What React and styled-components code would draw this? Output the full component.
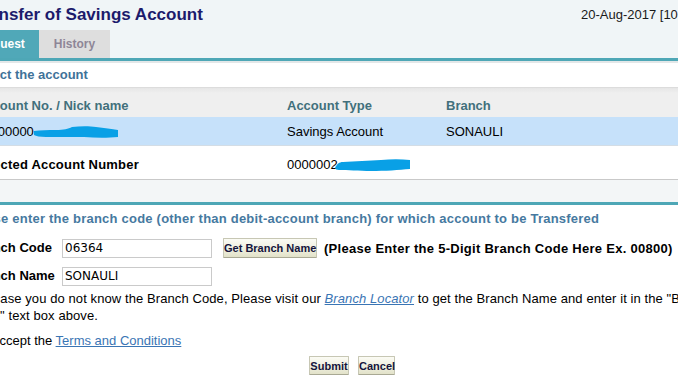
import React from "react";
import styled, { createGlobalStyle } from "styled-components";

const Global = createGlobalStyle`
  html, body { margin: 0; padding: 0; background: #fff; overflow: hidden; }
  body { font-family: "Liberation Sans", Arial, sans-serif; }
`;

const Page = styled.div`
  width: 718px;
  margin-left: -40px;
  font-family: "Liberation Sans", Arial, sans-serif;
  font-size: 13px;
  color: #000;
`;

const Header = styled.div`
  background: #f0f5f7;
  border-bottom: 3px solid #4ea7b6;
`;

const TitleRow = styled.div`
  display: flex;
  height: 30px;
`;

const Title = styled.h1`
  box-sizing: border-box;
  flex: 0 0 621px;
  margin: 0;
  padding: 5px 0 0 13px;
  font-size: 17px;
  line-height: 20px;
  font-weight: bold;
  color: #1c1b6c;
  white-space: nowrap;
`;

const DateText = styled.div`
  flex: 0 0 auto;
  padding-top: 7px;
  font-size: 13px;
  line-height: 15px;
  color: #1a1a1a;
  white-space: nowrap;
`;

const Tabs = styled.div`
  display: flex;
  height: 28px;
  padding-left: 3px;
`;

const Tab = styled.div`
  padding: 0 14.5px;
  line-height: 28px;
  font-size: 12px;
  font-weight: bold;
  background: ${(p) => (p.$active ? "#50a8b8" : "#dedede")};
  color: ${(p) => (p.$active ? "#ffffff" : "#8e8697")};
`;

const SelectBar = styled.div`
  border-top: 2px solid #e3e7e8;
  height: 24px;
  line-height: 24px;
  padding-left: 13px;
  font-weight: bold;
  color: #3f7299;
  background: #fff;
`;

const TableHead = styled.div`
  display: grid;
  grid-template-columns: 311px 159px 1fr;
  padding: 6px 0 0 16px;
  line-height: 23px;
  border-top: 1px solid #dcdcdc;
  background: linear-gradient(#e6e6e6, #efefef 5px, #efefef);
  font-weight: bold;
  color: #42707c;
`;

const SelectedRow = styled.div`
  display: grid;
  grid-template-columns: 311px 159px 1fr;
  padding: 1px 0 0 16px;
  line-height: 27px;
  background: #c6e1fa;
  border-bottom: 1px solid #d4dde5;
`;

const AccountRow = styled.div`
  display: grid;
  grid-template-columns: 314px 1fr;
  padding: 5px 0 0 13px;
  line-height: 28px;
  background: #fff;
  border-bottom: 1px solid #c9c9c9;
`;

const Label = styled.span`
  font-weight: bold;
  white-space: nowrap;
  letter-spacing: 0.2px;
`;

const Cell = styled.span`
  white-space: nowrap;
`;

const TableFoot = styled.div`
  height: 22px;
  background: #f3f6f7;
  border-bottom: 3px solid #4ea7b6;
`;

const Scribble = styled.svg`
  display: inline-block;
  vertical-align: -2px;
  margin-left: ${(p) => p.$shift || 0}px;
`;

const FormHeading = styled.div`
  padding: 5.5px 0 0 6px;
  line-height: 16px;
  font-weight: bold;
  letter-spacing: 0.22px;
  color: #4679a0;
  white-space: nowrap;
`;

const FieldRow = styled.div`
  display: flex;
  align-items: center;
  height: 20px;
  margin-top: ${(p) => p.$gap}px;
  padding-left: 11px;
`;

const FieldLabel = styled.span`
  width: 91px;
  font-weight: bold;
  white-space: nowrap;
  line-height: 20px;
`;

const TextInput = styled.input`
  box-sizing: border-box;
  width: 150px;
  height: 19px;
  margin: 0;
  padding: 0 2px;
  border: 1px solid #cacaca;
  font-family: "DejaVu Sans", Tahoma, sans-serif;
  font-size: 12px;
  color: #000;
  background: #fff;
  outline: none;
`;

const Btn = styled.button`
  box-sizing: border-box;
  width: ${(p) => p.$w}px;
  height: ${(p) => p.$h || 19}px;
  margin: 0;
  margin-left: ${(p) => p.$ml || 0}px;
  padding: 0;
  border: 1px solid #c7c7b4;
  border-bottom-color: #a9a994;
  border-radius: 1px;
  background: linear-gradient(#fbfbf4, #eeeedd 60%, #e2e2c9);
  font-family: "Liberation Sans", Arial, sans-serif;
  font-size: 11px;
  font-weight: bold;
  color: #14143c;
  white-space: nowrap;
`;

const Hint = styled.span`
  margin-left: ${(p) => p.$gap}px;
  font-weight: bold;
  letter-spacing: 0.28px;
  white-space: nowrap;
`;

const Note = styled.div`
  margin-top: 5px;
  padding-left: 5px;
  text-indent: 14px;
  line-height: 16.5px;
  letter-spacing: 0.09px;
  white-space: nowrap;
`;

const Link = styled.a`
  color: #3a75b4;
  text-decoration: underline;
  font-style: ${(p) => (p.$italic ? "italic" : "normal")};
`;

const AcceptRow = styled.div`
  display: flex;
  align-items: center;
  margin-top: 8.5px;
  padding-left: 8px;
  line-height: 16.5px;
  white-space: nowrap;
`;

const Check = styled.input`
  width: 13px;
  height: 13px;
  margin: 0 4px 0 0;
`;

const ButtonRow = styled.div`
  display: flex;
  gap: 9px;
  margin-top: 7px;
  padding-left: 349px;
`;

const BlueMark1 = () => (
  <Scribble width="84" height="12" viewBox="0 0 84 12">
    <path
      d="M0 5 C6 4 14 4 22 4 C30 4 34 3 38 1 C46 0 56 0 62 1 C70 2 78 3 84 4 L84 11 C74 12 62 12 50 11 C38 11 24 11 12 11 C6 11 2 10 0 9 Z"
      fill="#09a0e6"
    />
  </Scribble>
);

const BlueMark2 = () => (
  <Scribble width="75" height="12" viewBox="0 0 75 12" $shift={-3}>
    <path
      d="M0 9 C2 5 4 3 8 3 C20 2 34 2 46 1 C56 0 66 0 75 1 L75 10 C64 11 50 12 36 12 C24 12 12 11 4 11 C2 11 0 10 0 9 Z"
      fill="#09a0e6"
    />
  </Scribble>
);

export default function App() {
  return (
    <>
      <Global />
      <Page>
        <Header>
          <TitleRow>
            <Title>Transfer of Savings Account</Title>
            <DateText>20-Aug-2017 [10:42:18 AM]</DateText>
          </TitleRow>
          <Tabs>
            <Tab $active>Request</Tab>
            <Tab>History</Tab>
          </Tabs>
        </Header>

        <SelectBar>Select the account</SelectBar>

        <TableHead>
          <span>Account No. / Nick name</span>
          <span>Account Type</span>
          <span>Branch</span>
        </TableHead>
        <SelectedRow>
          <Cell>
            00000000
            <BlueMark1 />
          </Cell>
          <Cell>Savings Account</Cell>
          <Cell>SONAULI</Cell>
        </SelectedRow>
        <AccountRow>
          <Label>Selected Account Number</Label>
          <Cell>
            0000002
            <BlueMark2 />
          </Cell>
        </AccountRow>
        <TableFoot />

        <FormHeading>
          Please enter the branch code (other than debit-account branch) for which account to be Transfered
        </FormHeading>

        <FieldRow $gap={11.5}>
          <FieldLabel>Branch Code</FieldLabel>
          <TextInput defaultValue="06364" />
          <Btn $w={94} $h={20} $ml={11}>Get Branch Name</Btn>
          <Hint $gap={7}>(Please Enter the 5-Digit Branch Code Here Ex. 00800)</Hint>
        </FieldRow>
        <FieldRow $gap={8}>
          <FieldLabel>Branch Name</FieldLabel>
          <TextInput defaultValue="SONAULI" />
        </FieldRow>

        <Note>
          In case you do not know the Branch Code, Please visit our{" "}
          <Link $italic>Branch Locator</Link> to get the Branch Name and enter it in the "Branch
          <br />
          Name" text box above.
        </Note>

        <AcceptRow>
          <Check type="checkbox" />
          <span>
            I accept the <Link>Terms and Conditions</Link>
          </span>
        </AcceptRow>

        <ButtonRow>
          <Btn $w={40}>Submit</Btn>
          <Btn $w={37}>Cancel</Btn>
        </ButtonRow>
      </Page>
    </>
  );
}
